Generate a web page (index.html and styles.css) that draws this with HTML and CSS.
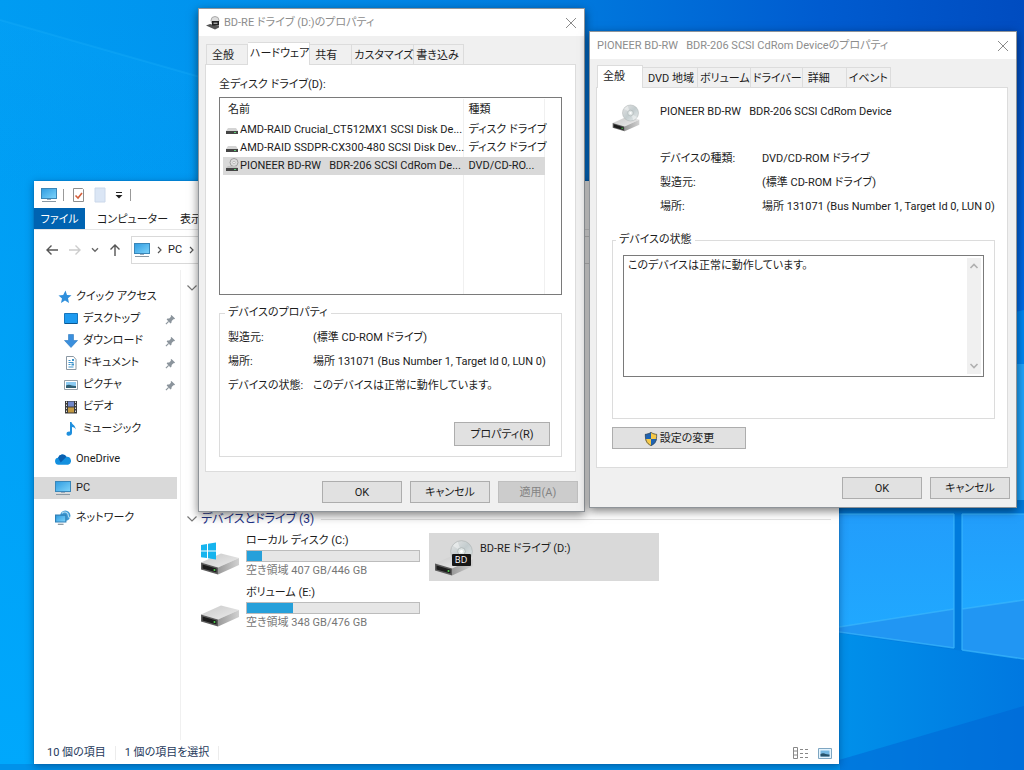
FILE: index.html
```html
<!DOCTYPE html>
<html lang="ja">
<head>
<meta charset="utf-8">
<title>BD-RE ドライブ (D:)のプロパティ</title>
<link rel="stylesheet" href="styles.css">
</head>
<body>
<svg class="defs" aria-hidden="true">
  <defs>
    <linearGradient id="g-screen" x1="0" y1="0" x2="1" y2="1"><stop offset="0" stop-color="#2f9be0"/><stop offset="1" stop-color="#7fd4fb"/></linearGradient>
    <linearGradient id="g-top" x1="0" y1="0" x2="1" y2="1"><stop offset="0" stop-color="#c9c9c9"/><stop offset="1" stop-color="#ececec"/></linearGradient>
    <linearGradient id="g-side" x1="0" y1="0" x2="1" y2="0"><stop offset="0" stop-color="#9a9a9a"/><stop offset="1" stop-color="#d2d2d2"/></linearGradient>
    <linearGradient id="g-disc" x1="0" y1="0" x2="1" y2="1"><stop offset="0" stop-color="#e6e6e6"/><stop offset=".5" stop-color="#c3ccce"/><stop offset="1" stop-color="#e9eeee"/></linearGradient>
  </defs>
  <symbol id="pc" viewBox="0 0 16 16">
    <rect x=".5" y="1.5" width="15" height="10" fill="url(#g-screen)" stroke="#3a86b8"/>
    <path d="M6 12h4v1H6z" fill="#9ab"/><path d="M1 14.5h14" stroke="#8a98a3"/>
  </symbol>
  <symbol id="drive" viewBox="0 0 40 22">
    <path d="M1 9.500 21 .5 39 5 18 14.500z" fill="url(#g-top)"/>
    <path d="M18 14.500 39 5v7L18 21.500z" fill="url(#g-side)"/>
    <path d="M1 9.500l17 5v7L1 16.500z" fill="#5c5c5c"/>
    <path d="M2.500 11.500 16.500 15.500v4L2.500 15.500z" fill="#1c1c1c"/>
    <circle cx="14.500" cy="17" r="1" fill="#4fd24f"/>
  </symbol>
  <symbol id="disc" viewBox="0 0 24 24">
    <circle cx="12" cy="12" r="11.300" fill="url(#g-disc)" stroke="#b3b8b8" stroke-width=".8"/>
    <path d="M12 12 3 6a11 11 0 0 1 5-4zM12 12l9 6a11 11 0 0 1-5 4z" fill="#fff" opacity=".4"/>
    <circle cx="12" cy="12" r="4" fill="#dfe6e6" stroke="#a9b0b0" stroke-width=".8"/>
    <circle cx="12" cy="12" r="1.500" fill="#fff"/>
  </symbol>
  <symbol id="mini-drive" viewBox="0 0 14 14">
    <path d="M3 6h8l2 3H1z" fill="#d4d4d4"/><path d="M1 9h12v3H1z" fill="#454545"/><path d="M9 10.500h2" stroke="#5fd07a"/>
  </symbol>
  <symbol id="mini-disc" viewBox="0 0 14 14">
    <circle cx="9" cy="4.500" r="4" fill="#dcdcdc" stroke="#9d9d9d"/><circle cx="9" cy="4.500" r="1.200" fill="#fff" stroke="#999" stroke-width=".6"/>
    <path d="M3 8h8l2 2H1z" fill="#c2c2c2"/><path d="M1 10h12v3H1z" fill="#454545"/><path d="M9 11.500h2" stroke="#5fd07a"/>
  </symbol>
  <symbol id="pin" viewBox="0 0 12 12">
    <path d="M7 1l4 4-1 .8-.8-.2L7.300 7.500 7 9.500l-1 .8L1.800 6l.8-1 2-.2L6.500 3 6.200 2z" fill="#8b949c"/><path d="M4 8 1 11" stroke="#8b949c" stroke-width="1.200"/>
  </symbol>
  <symbol id="chev" viewBox="0 0 12 12"><path d="M1.500 3.500 6 8l4.500-4.500" fill="none" stroke="#777" stroke-width="1.200"/></symbol>
  <symbol id="close" viewBox="0 0 12 12"><path d="M1 1l10 10M11 1 1 11" fill="none" stroke="#8a8a8a"/></symbol>
</svg>

<svg class="wallpaper" viewBox="0 0 1024 770" preserveAspectRatio="none" aria-hidden="true">
  <defs>
    <linearGradient id="w-base" gradientUnits="userSpaceOnUse" x1="0" y1="0" x2="1024" y2="0"><stop offset="0" stop-color="#009cf2"/><stop offset=".2" stop-color="#0093ee"/><stop offset=".55" stop-color="#007ade"/><stop offset=".8" stop-color="#005cd0"/><stop offset="1" stop-color="#004cc0"/></linearGradient>
    <linearGradient id="w-left" x1="0" y1="0" x2="0" y2="1"><stop offset="0" stop-color="#00a6fb" stop-opacity="0"/><stop offset="1" stop-color="#00a8fc"/></linearGradient>
    <linearGradient id="w-low" x1="0" y1="0" x2="1" y2="0"><stop offset="0" stop-color="#0090ea"/><stop offset="1" stop-color="#0078e0"/></linearGradient>
    <linearGradient id="w-pane" x1="0" y1="0" x2="0" y2="1"><stop offset="0" stop-color="#229dfb"/><stop offset="1" stop-color="#20a8ff"/></linearGradient>
    <linearGradient id="w-side" x1="0" y1="0" x2="0" y2="1"><stop offset="0" stop-color="#004cc0"/><stop offset="1" stop-color="#006ce8"/></linearGradient>
    <linearGradient id="w-ray" x1="0" y1="0" x2="0" y2="1"><stop offset="0" stop-color="#08a4f8" stop-opacity=".3"/><stop offset="1" stop-color="#08a4f8" stop-opacity="0"/></linearGradient>
  </defs>
  <rect width="1024" height="770" fill="url(#w-base)"/>
  <path d="M0 0h300v770H0z" fill="url(#w-left)"/>
  <path d="M0 20 200 77v123H0z" fill="url(#w-ray)"/>
  <path d="M0 20 200 77" stroke="#1cb0fa" stroke-width="2" opacity=".3"/>
  <path d="M1010 20h14v300h-14z" fill="url(#w-side)"/>
  <path d="M1010 313l14-3v55h-14z" fill="#0086f2"/>
  <path d="M1010 364h14v145h-14z" fill="#20a4fc"/>
  <path d="M839 500h185v270H839z" fill="url(#w-low)"/>
  <path d="M839 500h185v160l-185-27z" fill="#007bdd"/>
  <path d="M839 514h115v134l-115-16z" fill="#2196f3"/>
  <path d="M962 514h62v145l-62-9z" fill="#2196f3"/>
  <path d="M839 514h115v95l-115 18z" fill="url(#w-pane)"/>
  <path d="M962 514h62v86l-62 9z" fill="url(#w-pane)"/>
  <path d="M839 627l115-18M962 609l62-9M839 632l115 16M962 650l62 9M954 514v134M962 514v136M839 514h115M962 514h62" fill="none" stroke="#3bb6fc" stroke-width="1.500" opacity=".7"/>
  <path d="M839 760l185-54v64H839z" fill="#0064d4" opacity=".5"/>
  <path d="M0 764h840v6H0z" fill="#0092ea"/>
</svg>

<main class="desktop">
  <section class="window explorer" aria-label="PC">
    <div class="quickbar">
      <svg class="ic16"><use href="#pc"/></svg>
      <i class="sep"></i>
      <svg class="ic16" viewBox="0 0 16 16"><path d="M3.500 1.500h9l1 1v12h-10z" fill="#fff" stroke="#8e8e8e"/><path d="M5.500 8.500 8 11l4-5" fill="none" stroke="#d35f3c" stroke-width="1.600"/></svg>
      <svg class="ic16" viewBox="0 0 16 16"><path d="M3 1h10v14H3z" fill="#dbe6f5" stroke="#cbd8ea"/></svg>
      <svg class="ic10" viewBox="0 0 10 10"><path d="M2 2.500h6" stroke="#222"/><path d="M1.500 5h7L5 8.500z" fill="#222"/></svg>
      <i class="sep"></i>
    </div>
    <nav class="ribbon">
      <button class="ribbon-tab file">ファイル</button>
      <button class="ribbon-tab">コンピューター</button>
      <button class="ribbon-tab">表示</button>
    </nav>
    <div class="navrow">
      <svg class="ic14" viewBox="0 0 14 14"><path d="M13 7H2M6.500 2.500 2 7l4.500 4.500" fill="none" stroke="#555" stroke-width="1.400"/></svg>
      <svg class="ic14" viewBox="0 0 14 14"><path d="M1 7h11M7.500 2.500 12 7l-4.500 4.500" fill="none" stroke="#ccc" stroke-width="1.400"/></svg>
      <svg class="ic8" viewBox="0 0 12 12"><path d="M1.500 3.500 6 8l4.500-4.500" fill="none" stroke="#666" stroke-width="2"/></svg>
      <svg class="ic14" viewBox="0 0 14 14"><path d="M7 13V2M2.500 6.500 7 2l4.500 4.500" fill="none" stroke="#555" stroke-width="1.400"/></svg>
      <div class="address">
        <svg class="ic16"><use href="#pc"/></svg>
        <svg class="ic8" viewBox="0 0 8 8"><path d="M3 1l3 3-3 3" fill="none" stroke="#555" stroke-width="1.200"/></svg>
        <span>PC</span>
        <svg class="ic8" viewBox="0 0 8 8"><path d="M3 1l3 3-3 3" fill="none" stroke="#555" stroke-width="1.200"/></svg>
      </div>
      <input class="search" type="search" aria-label="検索" placeholder="検索">
    </div>
    <div class="explorer-body">
      <nav class="tree">
        <a class="node" href="#"><svg class="ic14" viewBox="0 0 14 14"><path d="M7.500.5 9 5l4.500.3L10 8.300l1 4.700-4-2.500L3 13l1-4.500L.5 5.600 5.200 5z" fill="#2f8fdc"/></svg>クイック アクセス</a>
        <a class="node sub" href="#"><svg class="ic14" viewBox="0 0 14 14"><path d="M.5 1.500h13v10H.5z" fill="#1e9bf0" stroke="#1676bd"/><path d="M1 11.500h12" stroke="#0c568f"/></svg><span>デスクトップ</span><svg class="pin"><use href="#pin"/></svg></a>
        <a class="node sub" href="#"><svg class="ic14" viewBox="0 0 14 14"><path d="M4.500.5h5v6h4L7 13.500.5 6.500h4z" fill="#3a8fdd" stroke="#2b78c0" stroke-width=".6"/></svg><span>ダウンロード</span><svg class="pin"><use href="#pin"/></svg></a>
        <a class="node sub" href="#"><svg class="ic14" viewBox="0 0 14 14"><path d="M2.500.5h7l2.500 3v10H2.500z" fill="#fff" stroke="#8b98a3"/><path d="M4.500 4.500h2M4.500 6.500h5M4.500 8.500h2M4.500 11h5" stroke="#3c93cc"/><path d="M7.500 7.500h2.500v2H7.500zM8 3h2v2H8z" fill="#3c93cc"/></svg><span>ドキュメント</span><svg class="pin"><use href="#pin"/></svg></a>
        <a class="node sub" href="#"><svg class="ic14" viewBox="0 0 14 14"><path d="M.5 2.500h13v9H.5z" fill="#fff" stroke="#96a0a8"/><path d="M2 4h10v6H2z" fill="#8ccbf2"/><path d="M2 7.500c4-2 6 1 10 .5v2H2z" fill="#315f73"/></svg><span>ピクチャ</span><svg class="pin"><use href="#pin"/></svg></a>
        <a class="node sub" href="#"><svg class="ic14" viewBox="0 0 14 14"><path d="M1 1h12v12.500H1z" fill="#3a3a3a"/><path d="M4 1.500h6v5H4z" fill="#6f86c9"/><path d="M4 7.500h6v5H4z" fill="#c49a42"/><path d="M2.500 1.500v12M11.500 1.500v12" stroke="#ddd" stroke-dasharray="1.500 1.500"/></svg><span>ビデオ</span></a>
        <a class="node sub" href="#"><svg class="ic14" viewBox="0 0 14 14"><path d="M6 0h1.500c.5 2.800 4.500 3.500 4 7.500-.6-2-2-2.500-3.500-2.600V11c0 3.300-5.500 3.600-5.500.9 0-2 2-2.700 3.500-2.200z" fill="#1f8fdd"/></svg><span>ミュージック</span></a>
        <a class="node top" href="#"><svg class="ic16" viewBox="0 0 14 14"><path d="M3.500 12a3 3 0 0 1-.8-6 4 4 0 0 1 7.300-1 3.600 3.600 0 0 1 1.500 7z" fill="#1490df"/><path d="M2.700 6a4 4 0 0 1 7.300-1L5 10z" fill="#0a5fb0"/></svg>OneDrive</a>
        <a class="node top current" href="#"><svg class="ic16"><use href="#pc"/></svg>PC</a>
        <a class="node top" href="#"><svg class="ic16" viewBox="0 0 14 14"><circle cx="9" cy="5" r="4.500" fill="#3f9ad4"/><path d="M6 3c2-2 4-1 5 0s0 3 2 4" fill="none" stroke="#b8e0f5"/><path d="M.5 4.500h9v6h-9z" fill="url(#g-screen)" stroke="#2f7fb5"/><path d="M2.500 12.500h5" stroke="#7d8c96"/></svg>ネットワーク</a>
      </nav>
      <div class="content">
        <div class="group"><svg class="ic12"><use href="#chev"/></svg></div>
        <h2 class="group devices"><svg class="ic12"><use href="#chev"/></svg>デバイスとドライブ (3)</h2>
        <div class="drives">
          <div class="drive">
            <svg class="drive-ic" viewBox="0 0 40 40"><use href="#drive" y="16" width="40" height="22"/><path d="M1 8l6-1v6.500H1zM8 6.800 16 5.500v8H8zM1 14.500h6V21l-6-.8zM8 14.500h8v8l-8-1.300z" fill="#16b4ee"/></svg>
            <div class="drive-info"><span>ローカル ディスク (C:)</span><div class="meter"><i style="width:9%"></i></div><small>空き領域 407 GB/446 GB</small></div>
          </div>
          <div class="drive selected">
            <svg class="drive-ic" viewBox="0 0 40 40"><use href="#drive" y="17" width="40" height="22"/><use href="#disc" x="16" y="3" width="23" height="23"/><rect x="18" y="17" width="19" height="12" rx="1" fill="#161616"/><text class="bd" x="27" y="26" text-anchor="middle">BD</text></svg>
            <div class="drive-info"><span>BD-RE ドライブ (D:)</span></div>
          </div>
          <div class="drive">
            <svg class="drive-ic" viewBox="0 0 40 40"><use href="#drive" y="16" width="40" height="22"/></svg>
            <div class="drive-info"><span>ボリューム (E:)</span><div class="meter"><i style="width:27%"></i></div><small>空き領域 348 GB/476 GB</small></div>
          </div>
        </div>
      </div>
    </div>
    <footer class="status">
      <span>10 個の項目</span><i class="bar"></i><span>1 個の項目を選択</span><i class="bar"></i>
      <svg class="ic16 views" viewBox="0 0 16 16"><path d="M.5 2.500h4v11h-4zM.5 6h4M.5 10h4" fill="none" stroke="#888"/><path d="M7 4.500h3M12 4.500h3M7 8.500h3M12 8.500h3M7 12.500h3M12 12.500h3" stroke="#888"/></svg>
      <svg class="ic14" viewBox="0 0 14 14"><path d="M.5 2.500h13v10H.5z" fill="#e3f3fd" stroke="#7ea6c2"/><path d="M2.500 4.500h9v6h-9z" fill="#74b7e2"/><path d="M2.500 8c4-2 5 1 9 .5v2h-9z" fill="#28536b"/></svg>
    </footer>
  </section>

  <section class="window dialog drive-dialog" aria-label="BD-RE ドライブ (D:)のプロパティ">
    <header class="titlebar">
      <svg class="ic14" viewBox="0 0 14 14"><circle cx="9" cy="4.500" r="4" fill="#ddd" stroke="#aaa"/><path d="M0 9.500l4-1.500 9 2v1.500L9 13.500z" fill="#555"/><path d="M6 5h7v4.500H6z" fill="#222"/><path d="M7.500 7.200h4" stroke="#ddd"/></svg>
      <h1>BD-RE ドライブ (D:)のプロパティ</h1>
      <button class="close" aria-label="閉じる"><svg class="ic12"><use href="#close"/></svg></button>
    </header>
    <div class="tabs" role="tablist">
      <button class="tab w42" role="tab">全般</button>
      <button class="tab w60 active" role="tab" aria-selected="true">ハードウェア</button>
      <button class="tab w42" role="tab">共有</button>
      <button class="tab w60" role="tab">カスタマイズ</button>
      <button class="tab w50" role="tab">書き込み</button>
    </div>
    <div class="panel">
      <p class="list-label" id="list-label">全ディスク ドライブ(D):</p>
      <div class="listbox">
        <table aria-labelledby="list-label">
          <thead><tr><th class="c-name">名前</th><th>種類</th><th class="c-rest"></th></tr></thead>
          <tbody>
            <tr><td><svg class="ic14"><use href="#mini-drive"/></svg>AMD-RAID Crucial_CT512MX1 SCSI Disk De...</td><td>ディスク ドライブ</td><td></td></tr>
            <tr><td><svg class="ic14"><use href="#mini-drive"/></svg>AMD-RAID SSDPR-CX300-480 SCSI Disk Dev...</td><td>ディスク ドライブ</td><td></td></tr>
            <tr class="picked"><td><svg class="ic14"><use href="#mini-disc"/></svg>PIONEER BD-RW   BDR-206 SCSI CdRom De...</td><td>DVD/CD-RO...</td><td></td></tr>
            <tr class="filler"><td></td><td></td><td></td></tr>
          </tbody>
        </table>
      </div>
      <fieldset class="props">
        <legend>デバイスのプロパティ</legend>
        <dl class="facts">
          <dt>製造元:</dt><dd>(標準 CD-ROM ドライブ)</dd>
          <dt>場所:</dt><dd>場所 131071 (Bus Number 1, Target Id 0, LUN 0)</dd>
          <dt>デバイスの状態:</dt><dd>このデバイスは正常に動作しています。</dd>
        </dl>
        <button class="btn wide">プロパティ(R)</button>
      </fieldset>
    </div>
    <footer class="actions">
      <button class="btn">OK</button><button class="btn">キャンセル</button><button class="btn" disabled>適用(A)</button>
    </footer>
  </section>

  <section class="window dialog device-dialog" aria-label="PIONEER BD-RW BDR-206 SCSI CdRom Deviceのプロパティ">
    <header class="titlebar">
      <h1>PIONEER BD-RW   BDR-206 SCSI CdRom Deviceのプロパティ</h1>
      <button class="close" aria-label="閉じる"><svg class="ic12"><use href="#close"/></svg></button>
    </header>
    <div class="tabs" role="tablist">
      <button class="tab w46 active" role="tab" aria-selected="true">全般</button>
      <button class="tab w56" role="tab">DVD 地域</button>
      <button class="tab w50" role="tab">ボリューム</button>
      <button class="tab w50" role="tab">ドライバー</button>
      <button class="tab w44" role="tab">詳細</button>
      <button class="tab w40" role="tab">イベント</button>
    </div>
    <div class="panel">
      <div class="device-head">
        <svg class="device-ic" viewBox="0 0 28 28"><use href="#drive" x="0" y="12" width="28" height="16"/><use href="#disc" x="10" y="0" width="17" height="18"/></svg>
        <span>PIONEER BD-RW   BDR-206 SCSI CdRom Device</span>
      </div>
      <dl class="facts">
        <dt>デバイスの種類:</dt><dd>DVD/CD-ROM ドライブ</dd>
        <dt>製造元:</dt><dd>(標準 CD-ROM ドライブ)</dd>
        <dt>場所:</dt><dd>場所 131071 (Bus Number 1, Target Id 0, LUN 0)</dd>
      </dl>
      <fieldset class="state">
        <legend id="state-label">デバイスの状態</legend>
        <div class="statebox">
          <textarea readonly aria-labelledby="state-label">このデバイスは正常に動作しています。</textarea>
          <div class="scroll">
            <svg class="ic10" viewBox="0 0 10 10"><path d="M1.500 7 5 3.500 8.500 7" fill="none" stroke="#b0b0b0" stroke-width="1.600"/></svg>
            <svg class="ic10" viewBox="0 0 10 10"><path d="M1.500 3 5 6.500 8.500 3" fill="none" stroke="#b0b0b0" stroke-width="1.600"/></svg>
          </div>
        </div>
      </fieldset>
      <button class="btn settings"><svg class="ic14" viewBox="0 0 14 14"><path d="M7 0C5 1.500 3 2 1 2c0 6 1 9 6 12z" fill="#1d63b4"/><path d="M7 0c2 1.500 4 2 6 2 0 6-1 9-6 12z" fill="#f7c948"/><path d="M1.200 7H7v7C3 12 1.600 10 1.200 7z" fill="#f7c948"/><path d="M7 7h5.800c-.4 3-1.800 5-5.800 7z" fill="#1d63b4"/><path d="M7 .4c2 1.400 4 1.900 5.700 1.900 0 5.700-1 8.700-5.700 11.300C2.300 11 1.300 8 1.300 2.300 3 2.300 5 1.800 7 .4z" fill="none" stroke="#46505a" stroke-width=".8"/></svg>設定の変更</button>
    </div>
    <footer class="actions">
      <button class="btn">OK</button><button class="btn">キャンセル</button>
    </footer>
  </section>
</main>
</body>
</html>
```
FILE: styles.css
```css
* { box-sizing: border-box; }
html, body { height: 100%; }
body {
  margin: 0;
  overflow: hidden;
  background: #0078d7;
  color: #1c1c1c;
  font: 11px/16px Roboto, "Noto Sans CJK JP", sans-serif;
  font-feature-settings: "palt";
}
button, input, textarea { font: inherit; font-feature-settings: inherit; color: inherit; }
h1, h2, p, dl, dd { margin: 0; font-size: inherit; font-weight: 400; }
svg { flex: none; display: block; }
.defs { position: absolute; width: 0; height: 0; }
.ic8 { width: 8px; height: 8px; }
.ic10 { width: 10px; height: 10px; }
.ic12 { width: 12px; height: 12px; }
.ic14 { width: 14px; height: 14px; }
.ic16 { width: 16px; height: 16px; }

.wallpaper { position: absolute; inset: 0; width: 100%; height: 100%; }
.desktop { position: relative; height: 100%; }
.window { position: absolute; display: flex; flex-direction: column; white-space: nowrap; }

/* Explorer */
.explorer {
  left: 34px; right: 185px; top: 181px; bottom: 6px;
  background: #fff;
  box-shadow: 0 0 1px #0a5a9a, 0 2px 8px rgba(0, 30, 80, .45);
}
.quickbar { display: flex; align-items: center; gap: 6px; height: 27px; padding: 0 7px; }
.sep { width: 1px; height: 12px; background: #999; }
.ribbon { display: flex; height: 22px; border-bottom: 1px solid #e6e6e6; }
.ribbon-tab { border: 0; padding: 2px 12px 0; background: none; }
.ribbon-tab + .ribbon-tab + .ribbon-tab { padding: 2px 0 0; }
.ribbon-tab.file { width: 51px; padding: 2px 0 0; background: #0063b1; color: #fff; }
.navrow { display: flex; align-items: center; gap: 9px; height: 40px; padding: 0 12px 0 11px; }
.address { display: flex; align-items: center; gap: 5px; width: 406px; height: 28px; padding: 0 2px; border: 1px solid #d9d9d9; }
.search { flex: 1; min-width: 0; height: 28px; border: 1px solid #d9d9d9; border-radius: 0; background: #fff; }
.explorer-body { display: flex; flex: 1; min-height: 0; }
.tree { width: 147px; padding-top: 16px; border-right: 1px solid #f0f0f0; }
.node { display: flex; align-items: center; gap: 4px; height: 22px; padding: 0 7px 0 24px; color: inherit; text-decoration: none; }
.node.sub { padding-left: 30px; gap: 5px; }
.node.sub span { flex: 1; }
.node.top { margin-top: 8px; padding-left: 21px; gap: 5px; }
.node.current { margin-right: 3px; background: #d9d9d9; margin-top: 7px; }
.pin { width: 11px; height: 11px; margin-right: -3px; }
.content { flex: 1; padding: 10px 8px 0 5px; }
.group { display: flex; align-items: center; gap: 3px; height: 16px; font-size: 12px; color: #1e3287; }
.group.devices { margin-top: 215px; }
.group.devices::after { content: ""; flex: 1; height: 1px; margin-left: 4px; background: #e2e2e2; }
.drives { display: grid; grid-template-columns: 230px 230px; column-gap: 4px; row-gap: 4px; padding: 6px 0 0 9px; }
.drive { display: flex; gap: 6px; height: 48px; padding: 0 5px; }
.drive.selected { background: #d9d9d9; }
.drive-ic { width: 40px; height: 40px; align-self: center; }
.drive-info { flex: 1; display: flex; flex-direction: column; }
.selected .drive-info { padding-top: 8px; }
.meter { height: 12px; border: 1px solid #bcbcbc; background: #e6e6e6; margin: 1px 0; }
.meter i { display: block; height: 100%; background: #26a0da; }
.drive small { font-size: 11px; color: #767676; }
.bd { font: 9px "Open Sans", sans-serif; fill: #fff; }
.status { display: flex; align-items: center; gap: 9px; height: 24px; padding: 2px 7px 0 13px; color: #1e395b; }
.bar { width: 1px; height: 14px; background: #ececec; }
.views { margin-left: auto; }

/* Property dialogs */
.dialog {
  background: #f0f0f0;
  border: 1px solid #8f9499;
  box-shadow: 0 3px 9px rgba(0, 0, 0, .5);
}
.drive-dialog { left: 198px; top: 8px; width: 387px; }
.device-dialog { left: 589px; right: 7px; top: 31px; }
.titlebar { display: flex; align-items: center; gap: 4px; height: 27px; padding: 0 7px; background: #fff; color: #8d8d8d; }
.titlebar h1 { flex: 1; }
.titlebar h1, td, .device-head span { white-space: pre; }
.close { display: flex; padding: 0; border: 0; background: none; }
.tabs { display: flex; align-items: flex-end; height: 28px; padding: 0 7px; }
.tab { height: 20px; padding: 2px 0 0 2px; text-align: left; border: 1px solid #dcdcdc; border-left-width: 0; border-bottom: 0; background: #f0f0f0; }
.tab:first-child { border-left-width: 1px; }
.tab.active { height: 23px; margin-bottom: -1px; padding-bottom: 3px; background: #fff; z-index: 1; }
.w40 { min-width: 44px; }
.w50 { min-width: 50px; }
.w60 { min-width: 60px; }
.tab.w42, .tab.w44, .tab.w46, .tab.w56 { padding-left: 5px; }
.w42 { min-width: 42px; }
.w44 { min-width: 44px; }
.w46 { min-width: 46px; }
.w56 { min-width: 55px; }
.panel { margin: 0 8px 0 6px; background: #fff; border: 1px solid #dcdcdc; }
.drive-dialog .panel { padding: 12px 13px 14px; }
.device-dialog .panel { padding: 10px 12px 18px 15px; }
.list-label { height: 20px; }
.listbox { height: 198px; padding: 1px 1px 0 3px; border: 1px solid #7a7a7a; }
table { width: 100%; height: 100%; border-collapse: collapse; table-layout: fixed; }
th, td { height: 18px; padding: 0 0 0 5px; text-align: left; font-weight: 400; border-right: 1px solid #f0f0f0; }
th { height: 22px; }
th:last-child, td:last-child { border-right: 0; }
th { width: 81px; }
.c-name { width: 240px; }
.c-rest { width: auto; }
td:first-child { padding-left: 2px; }
td svg { display: inline-block; margin-right: 1px; vertical-align: -3px; }
.picked td:not(:last-child) { background: #d9d9d9; border-color: #d9d9d9; }
.filler td { height: auto; }
fieldset { min-width: 0; margin: 0; padding: 0; border: 1px solid #dcdcdc; }
legend { margin-left: 5px; padding: 0 3px; height: 16px; }
.props { display: flex; flex-direction: column; height: 152px; margin-top: 10px; }
.facts { display: grid; grid-template-columns: 85px 1fr; row-gap: 8px; }
.props .facts { padding: 9px 8px 0; }
.btn { width: 80px; height: 22px; padding: 1px 0 0; border: 1px solid #adadad; background: #e1e1e1; }
.btn:disabled { background: #cccccc; border-color: #bfbfbf; color: #838383; }
.btn.wide { width: 96px; height: 24px; align-self: flex-end; margin: 28px 11px 0; }
.actions { display: flex; justify-content: flex-end; gap: 8px; padding: 9px 6px 8px; }
.device-head { display: flex; gap: 20px; height: 48px; padding-top: 6px; }
.device-ic { width: 28px; height: 28px; }
.device-dialog .facts { grid-template-columns: 102px 1fr; padding-left: 48px; padding-top: 5px; }
.state { height: 187px; margin-top: 17px; padding: 7px 10px 0; }
.device-dialog legend { margin-left: -7px; }
.statebox { display: flex; height: 122px; padding: 2px; border: 1px solid #7a7a7a; }
.statebox textarea { flex: 1; min-width: 0; padding: 0 2px; border: 0; outline: 0; resize: none; overflow: hidden; background: #fff; }
.scroll { display: flex; flex-direction: column; justify-content: space-between; align-items: center; width: 14px; padding: 3px 0; background: #f0f0f0; }
.btn.settings { display: flex; align-items: center; justify-content: center; gap: 2px; width: 134px; margin-top: 8px; }
```
